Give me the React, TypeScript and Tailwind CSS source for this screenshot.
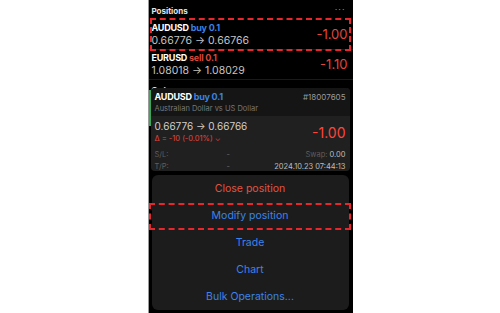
import React from "react";

const font = { fontFamily: "Inter, 'Liberation Sans', sans-serif" };

function PositionRow({
  symbol,
  side,
  lots,
  open,
  current,
  profit,
}: {
  symbol: string;
  side: "buy" | "sell";
  lots: string;
  open: string;
  current: string;
  profit: string;
}) {
  return (
    <div className="h-[30px] px-[3px] flex items-center justify-between border-b border-[#1a1a1a]">
      <div className="flex flex-col leading-none">
        <div className="text-[9px] font-bold tracking-tight">
          <span className="text-white">{symbol}</span>{" "}
          <span className={side === "buy" ? "text-[#3a82e6]" : "text-[#d9473a]"}>
            {side} {lots}
          </span>
        </div>
        <div className="text-[10.5px] text-[#c4c4c4] mt-[4px]">
          {open} → {current}
        </div>
      </div>
      <div className="text-[13px] text-[#e0463c] pr-[2px]">{profit}</div>
    </div>
  );
}

export default function App() {
  const menu = [
    { label: "Close position", color: "text-[#e0553f]" },
    { label: "Modify position", color: "text-[#3b84ea]" },
    { label: "Trade", color: "text-[#3b84ea]" },
    { label: "Chart", color: "text-[#3b84ea]" },
    { label: "Bulk Operations...", color: "text-[#3b84ea]" },
  ];

  return (
    <div className="w-full h-[313px] bg-white flex justify-center" style={font}>
      <div className="w-[205px] h-full bg-black relative overflow-hidden border-l border-[#9a9a9a]">
        {/* positions list */}
        <div className="h-[20px] px-[3px] pt-[2px] flex items-center justify-between">
          <span className="text-[8px] font-bold text-[#e6e6e6]">Positions</span>
          <span className="text-[9px] text-[#8a8a8a] tracking-[1px] pr-[4px] -mt-[2px]">···</span>
        </div>
        <PositionRow symbol="AUDUSD" side="buy" lots="0.1" open="0.66776" current="0.66766" profit="-1.00" />
        <PositionRow symbol="EURUSD" side="sell" lots="0.1" open="1.08018" current="1.08029" profit="-1.10" />
        <div className="h-[16px] px-[3px] flex items-end justify-between">
          <span className="text-[8px] font-bold text-[#e6e6e6]">Orders</span>
          <span className="text-[9px] text-[#8a8a8a] tracking-[1px] pr-[4px]">···</span>
        </div>

        {/* highlight around first row */}
        <div className="absolute left-[1px] right-[2px] top-[18px] h-[33px] border-2 border-dashed border-[#e8262b]" />

        {/* position detail popup */}
        <div className="absolute left-[2px] right-[3px] top-[88px] h-[83px] rounded-[4px] overflow-hidden bg-[#202020]">
          <div className="h-[28px] bg-[#151515] px-[4px] pt-[4px] flex flex-col">
            <div className="flex justify-between items-center leading-none">
              <div className="text-[9px] font-bold tracking-tight">
                <span className="text-white">AUDUSD</span>{" "}
                <span className="text-[#3a82e6]">buy 0.1</span>
              </div>
              <span className="text-[8px] text-[#9a9a9a]">#18007605</span>
            </div>
            <div className="text-[7.5px] text-[#777777] mt-[4px] leading-none">
              Australian Dollar vs US Dollar
            </div>
          </div>
          <div className="px-[4px] pt-[4px]">
            <div className="flex justify-between items-center">
              <div className="flex flex-col leading-none">
                <span className="text-[10px] text-[#d0d0d0]">0.66776 → 0.66766</span>
                <span className="text-[7.5px] text-[#e0463c] mt-[4px]">Δ = -10 (-0.01%) ⌄</span>
              </div>
              <span className="text-[14px] text-[#ff453a] pt-[2px]">-1.00</span>
            </div>
            <div className="mt-[6px] grid grid-cols-[72px_1fr] text-[7.5px] leading-[12px]">
              <span className="text-[#5e5e5e]">S/L:</span>
              <div className="flex justify-between">
                <span className="text-[#6a6a6a]">-</span>
                <span>
                  <span className="text-[#5e5e5e]">Swap:</span>{" "}
                  <span className="text-[#bdbdbd]">0.00</span>
                </span>
              </div>
              <span className="text-[#5e5e5e]">T/P:</span>
              <div className="flex justify-between">
                <span className="text-[#6a6a6a]">-</span>
                <span className="text-[#bdbdbd]">2024.10.23 07:44:13</span>
              </div>
            </div>
          </div>
        </div>
        <div className="absolute left-0 w-[2px] top-[90px] h-[36px] bg-[#3aa65a]" />

        {/* action sheet */}
        <div className="absolute left-[3px] right-[4px] top-[175px] bottom-[3px] rounded-[6px] bg-[#1c1c1c] flex flex-col">
          {menu.map((m) => (
            <div
              key={m.label}
              className={`h-[27px] flex items-center justify-center text-[10.5px] ${m.color}`}
            >
              {m.label}
            </div>
          ))}
        </div>

        {/* highlight around modify */}
        <div className="absolute left-0 right-[2px] top-[203px] h-[27px] border-2 border-dashed border-[#e8262b]" />
      </div>
    </div>
  );
}
